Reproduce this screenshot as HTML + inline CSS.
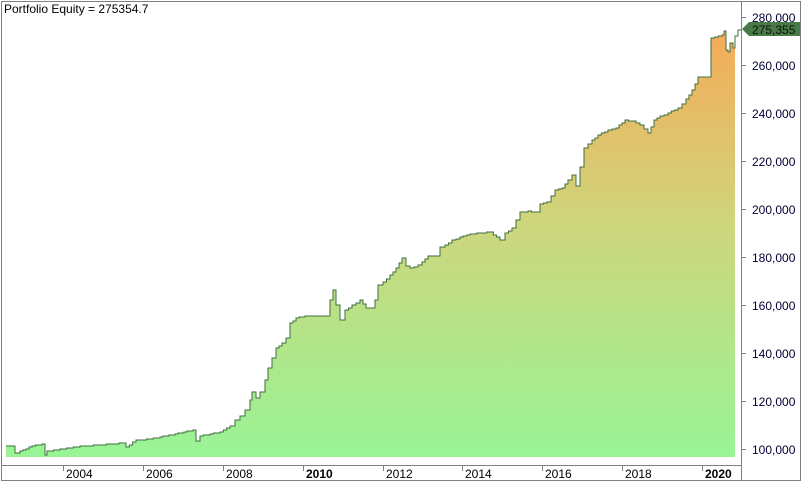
<!DOCTYPE html>
<html><head><style>
body{margin:0;background:#fff;width:808px;height:488px;overflow:hidden;font-family:"Liberation Sans",Arial,sans-serif}
</style></head><body>
<svg id="s" width="808" height="488" xmlns="http://www.w3.org/2000/svg" style="position:absolute;left:0;top:0">
<defs>
<linearGradient id="g" x1="0" y1="28" x2="0" y2="457" gradientUnits="userSpaceOnUse">
<stop offset="0" stop-color="#f6aa58"/>
<stop offset="0.45" stop-color="#cfd57c"/>
<stop offset="1" stop-color="#98f496"/>
</linearGradient>
</defs>
<rect x="1.5" y="1.5" width="799" height="479" fill="#fff" stroke="#808080"/>
<line x1="741.5" y1="1" x2="741.5" y2="481" stroke="#808080"/>
<line x1="1" y1="465.5" x2="741" y2="465.5" stroke="#808080"/>
<polygon id="fill" fill="url(#g)" stroke="none" points=""/>
<polyline id="line" fill="none" stroke="#3f6f3f" stroke-width="1" points=""/>
<g stroke="#808080">
<line x1="741" y1="17.5" x2="746" y2="17.5"/><line x1="741" y1="65.5" x2="746" y2="65.5"/><line x1="741" y1="113.5" x2="746" y2="113.5"/><line x1="741" y1="161.5" x2="746" y2="161.5"/><line x1="741" y1="209.5" x2="746" y2="209.5"/><line x1="741" y1="257.5" x2="746" y2="257.5"/><line x1="741" y1="305.5" x2="746" y2="305.5"/><line x1="741" y1="353.5" x2="746" y2="353.5"/><line x1="741" y1="401.5" x2="746" y2="401.5"/><line x1="741" y1="449.5" x2="746" y2="449.5"/>
<line x1="63.5" y1="466" x2="63.5" y2="471"/><line x1="143.5" y1="466" x2="143.5" y2="471"/><line x1="223.5" y1="466" x2="223.5" y2="471"/><line x1="303.5" y1="466" x2="303.5" y2="471"/><line x1="383.5" y1="466" x2="383.5" y2="471"/><line x1="462.5" y1="466" x2="462.5" y2="471"/><line x1="542.5" y1="466" x2="542.5" y2="471"/><line x1="622.5" y1="466" x2="622.5" y2="471"/><line x1="702.5" y1="466" x2="702.5" y2="471"/>
</g>
<g font-size="12" fill="#000" font-family="Liberation Sans,Arial,sans-serif">
<text x="4" y="13">Portfolio Equity = 275354.7</text>
<g fill="#000033">
<text x="752" y="22">280,000</text><text x="752" y="70">260,000</text><text x="752" y="118">240,000</text><text x="752" y="166">220,000</text><text x="752" y="214">200,000</text><text x="752" y="262">180,000</text><text x="752" y="310">160,000</text><text x="752" y="358">140,000</text><text x="752" y="406">120,000</text><text x="752" y="454">100,000</text>
</g>
<text x="66" y="478">2004</text><text x="146" y="478">2006</text><text x="226" y="478">2008</text><text x="306" y="478" font-weight="bold">2010</text><text x="386" y="478">2012</text><text x="465" y="478">2014</text><text x="545" y="478">2016</text><text x="625" y="478">2018</text><text x="705" y="478" font-weight="bold">2020</text>
</g>
<polygon points="742,29 749,22 800,22 800,36 749,36" fill="#487a48"/>
<text x="752" y="34" font-size="12" fill="#111" font-family="Liberation Sans,Arial,sans-serif">275,355</text>
</svg>
<script>
var p=[6,446,14,446,15,453,20,451,32,446,42,444,45,455,47,451,60,449,80,446,100,445,122,443,126,447,136,440,150,439,160,437,175,434,193,430,196,441,200,436,220,432,230,426,235,420,240,416,245,410,250,400,252,392,256,398,260,392,265,380,268,368,272,358,276,348,282,343,286,338,290,323,296,318,305,316,325,316,330,300,333,290,336,305,340,320,345,310,352,305,360,300,366,308,372,308,375,300,378,285,383,282,390,275,396,268,402,258,406,266,410,268,418,265,422,262,428,256,436,256,440,247,445,245,452,240,460,237,470,234,490,232,500,240,505,233,512,228,520,212,528,211,535,212,540,204,547,202,555,190,562,188,568,180,572,175,576,186,580,167,584,148,592,140,598,135,608,130,616,128,625,120,632,121,640,125,648,133,654,120,660,116,668,113,678,108,686,99,692,90,698,77,708,77,711,38,722,35,724,31,726,50,728,52,730,43,733,48,735,36];
var s=[];s.push(p[0]+","+p[1]);
for(var i=2;i<p.length;i+=2){
 var x0=p[i-2],y0=p[i-1],x1=p[i],y1=p[i+1];
 var n=Math.max(1,Math.floor((x1-x0)/3));
 for(var k=1;k<=n;k++){var x=x0+(x1-x0)*k/n;var y=y0+(y1-y0)*k/n;var py=s[s.length-1].split(",")[1];s.push(x+","+py);s.push(x+","+Math.round(y));}
}
var line=s.join(" ");
document.getElementById("line").setAttribute("points",line+" 738,36 738,30 741,30");
document.getElementById("fill").setAttribute("points","6,457 "+line+" 735,457");
</script>
</body></html>
